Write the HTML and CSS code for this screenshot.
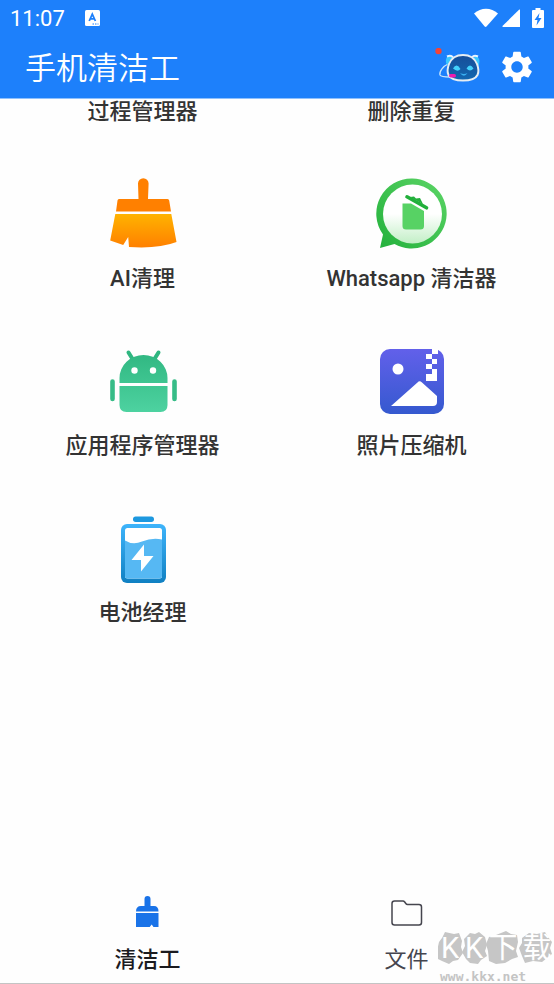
FILE: index.html
```
<!DOCTYPE html>
<html lang="zh-CN">
<head>
    <meta charset="UTF-8">
    <meta name="viewport" content="width=device-width, initial-scale=1">
    <title>手机清洁工</title>
    <link rel="stylesheet" href="styles.css">
</head>
<body>

<header class="topbar">
    <div class="statusbar">
        <span class="clock">11:07</span>
        <svg class="lang" width="16" height="16" viewBox="0 0 16 16">
            <rect x="0" y="0" width="15" height="16" rx="1.5" fill="#fff"/>
            <path d="M4.200 11 7.300 4.200 10.400 11M5.300 8.800h4" fill="none" stroke="#1d80fb" stroke-width="1.800"/>
            <path d="M7.500 14H9M10 14h1.500M12.500 14h1" stroke="#1d80fb"/>
        </svg>
        <div class="signals">
            <svg width="24" height="20" viewBox="0 0 24 20"><path d="M0 5.500C7-.8 17-.8 24 5.500L12.500 18.600q-1 .8-1.800 0z" fill="#fff"/></svg>
            <svg width="18" height="20" viewBox="0 0 18 20"><path d="M18 1.500V19H1q-1-.3-.3-1.200L17 1.800q.6-.5 1-.3z" fill="#fff"/></svg>
            <svg class="charge" width="12" height="20" viewBox="0 0 12 20">
                <path d="M3.500 0h5v2H11q1 0 1 1v16q0 1-1 1H1q-1 0-1-1V3q0-1 1-1h2.500z" fill="#fff"/>
                <path d="M7.500 5 2.500 12H5.500L4.500 17.500 9.500 10H6.500z" fill="#1d80fb"/>
            </svg>
        </div>
    </div>
    <div class="titlebar">
        <h1>手机清洁工</h1>
        <button class="icon-button robot" type="button" aria-label="AI">
            <svg width="46" height="38" viewBox="0 0 46 38">
                <defs>
                    <linearGradient id="face" x1="0" y1="0" x2="0" y2="1">
                        <stop offset="0" stop-color="#174e99"/><stop offset="1" stop-color="#1267b0"/>
                    </linearGradient>
                </defs>
                <circle cx="3.500" cy="3" r="3.200" fill="#f44336"/>
                <path d="M13 16C8 18 4 24 5 27c1 2 6 2 10 2" fill="none" stroke="#c9e4fa" stroke-width="1.300"/>
                <path d="M15 8q-5 0-4 7l3 4 4-9zM40 8q6 1 4 9l-2 3-4-9z" fill="#39c7ff"/>
                <path d="M12 8.500q4-2 6 1M43 8.500q-4-2-6 1" fill="none" stroke="#e7f4ff" stroke-width="2"/>
                <path d="M28 7c-8 0-12 4-14 9-1.500 4-2 8-.5 11 2 4 8 5.500 14.500 5.500S40.500 31 42.500 27c1.500-3 1-7-.5-11-2-5-6-9-14-9z" fill="url(#face)" stroke="#e6edf3" stroke-width="2"/>
                <path d="M18 20.500q3.500-6 7.500.5-3 3.500-7.500-.5zM31.500 20.500q3.500-6 7 0-3.500 4-7 0z" fill="#43d1fc"/>
                <path d="M25 25q4 2 7.500 0-3.500 5.500-7.500 0z" fill="#3aaef0"/>
                <rect x="14" y="26" width="7" height="3.500" rx="1.700" fill="#ee1baf"/>
            </svg>
        </button>
        <button class="icon-button" type="button" aria-label="设置">
            <svg width="38" height="38" viewBox="0 0 24 24"><path fill="#fff" d="M19.140 12.940c.04-.3.060-.61.060-.94s-.02-.64-.07-.94l2.030-1.580c.18-.14.230-.41.120-.61l-1.920-3.320c-.12-.22-.37-.29-.59-.22l-2.390.96c-.5-.38-1.030-.7-1.620-.94l-.36-2.540c-.04-.24-.24-.41-.48-.41h-3.840c-.24 0-.43.170-.47.410l-.36 2.540c-.59.240-1.130.570-1.620.940l-2.390-.96c-.22-.08-.47 0-.59.220L2.740 8.870c-.12.210-.08.470.120.610l2.030 1.580c-.05.300-.09.630-.09.940s.02.640.070.940l-2.030 1.580c-.18.140-.23.410-.12.610l1.920 3.320c.12.220.370.290.590.220l2.390-.96c.5.380 1.030.700 1.620.940l.36 2.540c.05.240.240.410.480.410h3.840c.24 0 .44-.17.470-.41l.36-2.540c.59-.24 1.130-.56 1.620-.94l2.390.960c.22.080.470 0 .59-.22l1.920-3.320c.12-.22.070-.47-.12-.61l-2.010-1.580zM12 15.600c-1.980 0-3.600-1.620-3.600-3.600s1.620-3.600 3.600-3.600 3.600 1.620 3.600 3.600-1.620 3.600-3.600 3.600z"/></svg>
        </button>
    </div>
</header>

<main class="tools">
    <a class="tool scrolled" href="#process">过程管理器</a>
    <a class="tool scrolled" href="#duplicates">删除重复</a>

    <a class="tool" href="#ai">
        <svg width="72" height="72" viewBox="0 0 72 72">
            <defs>
                <linearGradient id="brush" x1="0" y1="0" x2="0" y2="1">
                    <stop offset="0" stop-color="#ffb300"/><stop offset="1" stop-color="#ff8000"/>
                </linearGradient>
            </defs>
            <path d="M31.500 21 31 5.500a5.300 5.300 0 0 1 10.600 0L41 21h19.500q1.500 0 1.700 1.500L64 33.500H9l1.500-11q.2-1.500 1.500-1.500z" fill="#ff8000"/>
            <path d="M8.300 36h56L69.500 64q-18 7-47.500 5l-.8-10-5 8-13-4.500z" fill="url(#brush)"/>
        </svg>
        <span>AI清理</span>
    </a>
    <a class="tool" href="#whatsapp">
        <svg width="72" height="72" viewBox="0 0 72 72">
            <defs>
                <linearGradient id="ring" x1="1" y1="0" x2="0" y2="1">
                    <stop offset="0" stop-color="#5cd566"/><stop offset="1" stop-color="#22b03b"/>
                </linearGradient>
                <linearGradient id="bubble" x1="0" y1="0" x2="0" y2="1">
                    <stop offset=".5" stop-color="#fff"/><stop offset="1" stop-color="#c2efc6"/>
                </linearGradient>
            </defs>
            <path d="M36.500.500a35 35 0 1 1-18 65.500L4 70l3-13.500A35.300 35.300 0 0 1 36.500.500z" fill="url(#ring)"/>
            <circle cx="36.500" cy="36" r="29.500" fill="url(#bubble)"/>
            <path d="M26.500 25.500H35L48 33v15q0 3.500-3.500 3.500h-14.500q-3.500 0-3.500-3.500z" fill="#57d264"/>
            <path d="m31 18.800 19.500 11" stroke="#22b03b" stroke-width="3.600" stroke-linecap="round"/>
            <path d="m34 19 4-.5 2 2 4-.5 3 6z" fill="#22b03b"/>
        </svg>
        <span>Whatsapp 清洁器</span>
    </a>

    <a class="tool" href="#apps">
        <svg width="72" height="72" viewBox="0 0 72 72">
            <defs>
                <linearGradient id="droid" gradientUnits="userSpaceOnUse" x1="0" y1="5" x2="0" y2="67">
                    <stop offset="0" stop-color="#2fb680"/><stop offset="1" stop-color="#4dd2a0"/>
                </linearGradient>
            </defs>
            <path d="m21.500 7.500 5 8M51.500 7.500l-5 8" stroke="#2fb680" stroke-width="4" stroke-linecap="round"/>
            <path d="M12.500 38V33a24 23 0 0 1 48 0v5z" fill="url(#droid)"/>
            <path d="M12.500 41h48v19q0 7-7 7h-34q-7 0-7-7z" fill="url(#droid)"/>
            <path d="M5.500 36.500v17.500M67.500 36.500v17.500" stroke="#36bc87" stroke-width="4.600" stroke-linecap="round"/>
            <circle cx="27.500" cy="25.500" r="3.200" fill="#fff"/>
            <circle cx="46" cy="25.500" r="3.200" fill="#fff"/>
        </svg>
        <span>应用程序管理器</span>
    </a>
    <a class="tool" href="#photos">
        <svg width="72" height="72" viewBox="0 0 72 72">
            <defs>
                <linearGradient id="photo" x1="0" y1="0" x2="0" y2="1">
                    <stop offset="0" stop-color="#6260ea"/><stop offset="1" stop-color="#3559cf"/>
                </linearGradient>
            </defs>
            <rect x="4" y="4" width="64" height="65" rx="10" fill="url(#photo)"/>
            <circle cx="22" cy="24" r="5.500" fill="#fff"/>
            <path d="M15 61 41.500 37.500Q43.500 35 46 37.500L61 51v6q0 4-4 4z" fill="#fff"/>
            <path d="M56 4h6v5h-6zM50 9h6v5h-6zM56 14h5v5h-5zM50 19h6v5h-6zM56 24h5v12H50v-7h6z" fill="#fff"/>
        </svg>
        <span>照片压缩机</span>
    </a>

    <a class="tool" href="#battery">
        <svg width="72" height="72" viewBox="0 0 72 72">
            <defs>
                <linearGradient id="case" x1="0" y1="0" x2="0" y2="1">
                    <stop offset="0" stop-color="#3eb4fb"/><stop offset="1" stop-color="#1080c2"/>
                </linearGradient>
            </defs>
            <rect x="26" y="4.500" width="21" height="5.500" rx="2.700" fill="#1d98df"/>
            <rect x="14" y="12" width="45" height="59" rx="6" fill="url(#case)"/>
            <rect x="18" y="16" width="37" height="50.500" rx="2.500" fill="#fff"/>
            <path d="M18 28.500q8 5 17 1 10-4 20-2v36.500q0 2.500-2.500 2.500h-32q-2.500 0-2.500-2.500z" fill="#56b8f3"/>
            <path d="M37 32.500 24.500 48h9.500V59.500L46.500 44H37z" fill="#fff"/>
        </svg>
        <span>电池经理</span>
    </a>
</main>

<nav class="tabs">
    <a class="tab active" href="#cleaner">
        <svg width="32" height="32" viewBox="0 0 32 32">
            <path d="M12.500 10V3a3 3 0 0 1 6 0V10H22q4.500 0 4.500 5.500H4Q4 10 9 10zM4 17H26.500v14h-5l-1.800-2.500-2 2.500H4z" fill="#1a73e8"/>
        </svg>
        <span>清洁工</span>
    </a>
    <a class="tab" href="#files">
        <svg width="32" height="32" viewBox="0 0 32 32">
            <path d="M3.500 5H12q1 0 1.500.8l1.500 2q.5.700 1.500.7H28q2.500 0 2.500 2.500v15.500q0 2.500-2.500 2.500H3.500q-2.500 0-2.500-2.500V7.500Q1 5 3.500 5z" fill="none" stroke="#45454e" stroke-width="1.500"/>
        </svg>
        <span>文件</span>
    </a>
</nav>

<div class="watermark">
    <div class="blobs">
        <svg width="116" height="34" viewBox="0 0 116 34">
            <g fill="#c6c6c6">
                <path d="m1 11 3-4 3-6 9 2 5-1 3 8-1 6 2 6-5 7-5 1-4 3-7-3-4-2-1-8z"/>
                <path d="m26 8 6-6 5 1 4-2 6 5 2 8-2 6 2 5-6 4-3 4-8-1-4-4-4-7 3-6z"/>
                <path d="m51 6 7-2 10-4 5 3 6 1 1 7-2 9 2 6-6 2-7 4-9 1-7-3-1-10-2-7z"/>
                <path d="m84 7 7-5 8 1 8-2 3 5 4 5-2 6 2 6-5 4-5 4-9-1-8 2-3-7-3-8 3-5z"/>
            </g>
        </svg>
        <div class="letters"><span>K</span><span>K</span><span>下</span><span>载</span></div>
    </div>
    <div class="site">www.kkx.net</div>
</div>

</body>
</html>
```
FILE: styles.css
```
* {
    box-sizing: border-box;
}
body {
    margin: 0;
    min-height: 100vh;
    display: flex;
    flex-direction: column;
    position: relative;
    background: #fefefe;
    color: #333;
    font-family: Roboto, "Noto Sans CJK SC", sans-serif;
}
a {
    color: inherit;
    text-decoration: none;
}
svg {
    display: block;
}

/* header */
.topbar {
    background: #1d80fb;
    color: #fff;
    border-bottom: 1px solid #8fc1fd;
}
.statusbar {
    display: flex;
    align-items: center;
    height: 36px;
    padding: 0 10px;
}
.clock {
    font-size: 22px;
    line-height: 36px;
    padding-top: 2px;
}
.lang {
    margin-left: 20px;
}
.signals {
    display: flex;
    gap: 4px;
    margin-left: auto;
}
.signals .charge {
    margin-left: 8px;
}
.titlebar {
    display: flex;
    align-items: center;
    height: 62px;
    padding: 0 18px 0 25px;
}
h1 {
    margin: 0 auto 0 0;
    padding-top: 4px;
    font-size: 31px;
    line-height: 40px;
    font-weight: 350;
}
.icon-button {
    padding: 0;
    border: 0;
    background: none;
    cursor: pointer;
}
.robot {
    margin-right: 17px;
}

/* tool grid */
.tools {
    display: grid;
    grid-template-columns: 1fr 1fr;
    padding: 0 8px;
}
.tool {
    display: flex;
    flex-direction: column;
    align-items: center;
    justify-content: flex-end;
    gap: 16px;
    height: 167px;
    font-size: 22px;
    line-height: 26px;
    font-weight: 500;
}
.tool.scrolled {
    height: 26px;
}

/* bottom tabs */
.tabs {
    display: grid;
    grid-template-columns: 1fr 1fr;
    margin-top: auto;
    padding: 0 18px 9px;
    border-bottom: 1px solid #c4c4c4;
}
.tab {
    display: flex;
    flex-direction: column;
    align-items: center;
    gap: 18px;
    font-size: 22px;
    line-height: 28px;
    color: #45454e;
}
.tab.active {
    color: #1b1b1f;
    font-weight: 500;
}

/* site mark over the corner */
.watermark {
    position: absolute;
    right: 0;
    bottom: 0;
    width: 116px;
    color: #c4c4c4;
}
.blobs {
    position: relative;
}
.letters {
    position: absolute;
    inset: 0;
    display: grid;
    grid-template-columns: 24px 24px 34px 34px;
    justify-items: center;
    font-size: 29px;
    line-height: 34px;
    color: #fff;
}
.site {
    padding: 4px 0 0 2px;
    font-family: "DejaVu Sans Mono", monospace;
    font-size: 13px;
    line-height: 15px;
    font-weight: bold;
}
```
